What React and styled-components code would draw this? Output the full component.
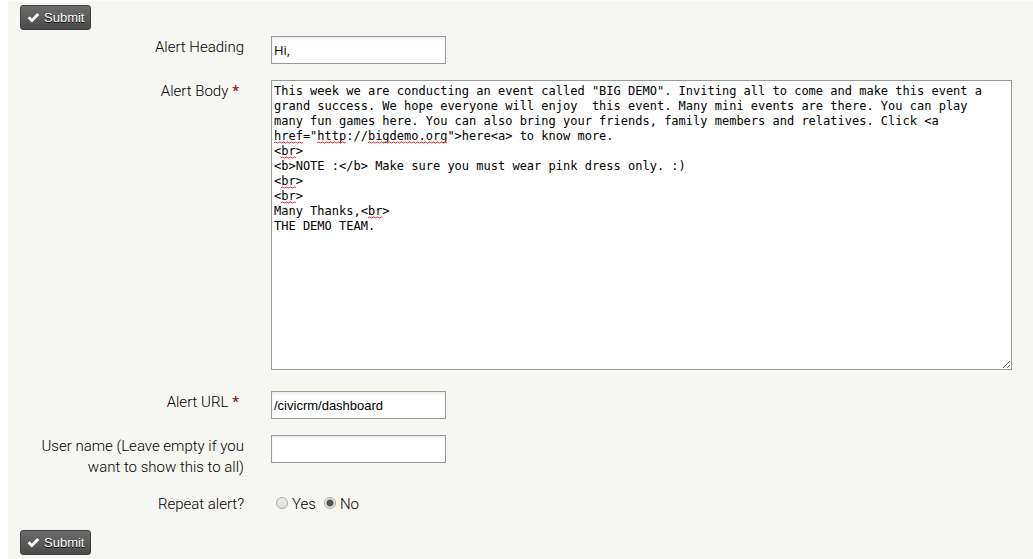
import React from "react";
import styled, { createGlobalStyle } from "styled-components";

const GlobalStyle = createGlobalStyle`
  * { box-sizing: border-box; }
  body {
    margin: 0;
    background: #fff;
    color: #000;
    font: 300 15px/21px Roboto, sans-serif;
  }
`;

const Form = styled.form`
  min-height: 100vh;
  margin-left: 8px;
  padding: 5px 21px 4px 12px;
  background: #f6f6f2;
  box-shadow: inset 0 2px 2px -1px #fff;
`;

const SubmitButton = styled.button`
  display: flex;
  align-items: center;
  gap: 4px;
  height: 25px;
  padding: 0 6px;
  border: 1px solid #3e3e3e;
  border-radius: 3px;
  background: linear-gradient(#6c6c6c, #4a4a4a);
  color: #fff;
  font: 13px/16px "Liberation Sans", Arial, sans-serif;
  text-shadow: 0 1px 0 #000;
`;

const Row = styled.div`
  display: grid;
  grid-template-columns: 224px minmax(0, 1fr);
  column-gap: 27px;
  align-items: start;
  margin-bottom: ${(p) => (p.$tall ? 21 : 16)}px;
`;

const Fields = styled.div`
  padding-top: 6px;

  > :last-child {
    margin-bottom: 15px;
  }
`;

const Label = styled.label`
  padding-top: 1px;
  text-align: right;
`;

const GroupLabel = styled.span`
  text-align: right;
`;

const Required = styled.span`
  margin: 0 5px 0 4px;
  color: #8b1a10;
  font-weight: 500;
`;

const TextInput = styled.input`
  width: 175px;
  height: 28px;
  padding: 1px 2px;
  border: 1px solid #999;
  border-radius: 0;
  background: #fff;
  box-shadow: inset 0 2px 3px #eee;
  color: #000;
  font: ${(p) => (p.$humanist ? '13px/16px "Open Sans"' : '13px/16px "Liberation Sans"')}, Arial, sans-serif;
`;

const Editor = styled.div`
  position: relative;
  height: 290px;
  font: 12px/15px "DejaVu Sans Mono", monospace;
`;

const BodyText = styled.textarea`
  display: block;
  width: 100%;
  height: 100%;
  padding: 3px 12px 2px 2px;
  border: 1px solid #999;
  border-radius: 0;
  background: #fff;
  color: #000;
  font: inherit;
  resize: both;
`;

const SpellingMark = styled.svg`
  position: absolute;
  top: calc(4px + ${(p) => p.$line} * 15px + 12px);
  left: calc(3px + ${(p) => p.$column} * 1ch);
  width: calc(${(p) => p.$length} * 1ch);
  height: 3px;
  pointer-events: none;
`;

const Choices = styled.div`
  display: flex;
  gap: 8px;
  padding-left: 5px;
`;

const Choice = styled.label`
  display: flex;
  align-items: center;
  gap: 4px;
`;

const Radio = styled.input`
  appearance: none;
  width: 12px;
  height: 12px;
  margin: 0 0 4px;
  border: 1px solid #aaa;
  border-radius: 50%;
  background: linear-gradient(#eee, #ddd);

  &:checked {
    background: radial-gradient(circle, #555 0 3px, #e6e6e6 4px);
  }
`;

const message = `This week we are conducting an event called "BIG DEMO". Inviting all to come and make this event a grand success. We hope everyone will enjoy  this event. Many mini events are there. You can play many fun games here. You can also bring your friends, family members and relatives. Click <a href="http://bigdemo.org">here<a> to know more.
<br>
<b>NOTE :</b> Make sure you must wear pink dress only. :)
<br>
<br>
Many Thanks,<br>
THE DEMO TEAM.`;

const misspellings = [
  { line: 3, column: 0, length: 4 },
  { line: 3, column: 6, length: 4 },
  { line: 3, column: 13, length: 11 },
  { line: 4, column: 1, length: 2 },
  { line: 6, column: 1, length: 2 },
  { line: 7, column: 1, length: 2 },
  { line: 8, column: 13, length: 2 },
];

// One wave every 4px, long enough for the longest marked word.
const wave = "M0 2" + "l1 -1h1l1 1h1".repeat(24);

function Submit() {
  return (
    <SubmitButton type="submit">
      <svg width="13" height="12" viewBox="0 0 13 12" aria-hidden="true">
        <path d="M.6 6.2 2.6 4.2 4.8 6.4 10.2 1 12.3 3.1 4.8 10.6Z" fill="#fff" />
      </svg>
      Submit
    </SubmitButton>
  );
}

export default function App() {
  return (
    <>
      <GlobalStyle />
      <Form onSubmit={(e) => e.preventDefault()}>
        <Submit />
        <Fields>
          <Row>
            <Label htmlFor="heading">Alert Heading</Label>
            <TextInput id="heading" $humanist defaultValue="Hi," />
          </Row>
          <Row $tall>
            <Label htmlFor="body">
              Alert Body<Required>*</Required>
            </Label>
            <Editor>
              <BodyText id="body" defaultValue={message} spellCheck={false} />
              {misspellings.map(({ line, column, length }) => (
                <SpellingMark
                  key={`${line}-${column}`}
                  $line={line}
                  $column={column}
                  $length={length}
                  aria-hidden="true"
                >
                  <path d={wave} fill="none" stroke="#f33" />
                </SpellingMark>
              ))}
            </Editor>
          </Row>
          <Row>
            <Label htmlFor="url">
              Alert URL<Required>*</Required>
            </Label>
            <TextInput id="url" defaultValue="/civicrm/dashboard" />
          </Row>
          <Row>
            <Label htmlFor="user">User name (Leave empty if you want to show this to all)</Label>
            <TextInput id="user" />
          </Row>
          <Row role="radiogroup" aria-labelledby="repeat">
            <GroupLabel id="repeat">Repeat alert?</GroupLabel>
            <Choices>
              <Choice>
                <Radio type="radio" name="repeat" value="yes" />
                Yes
              </Choice>
              <Choice>
                <Radio type="radio" name="repeat" value="no" defaultChecked />
                No
              </Choice>
            </Choices>
          </Row>
        </Fields>
        <Submit />
      </Form>
    </>
  );
}
